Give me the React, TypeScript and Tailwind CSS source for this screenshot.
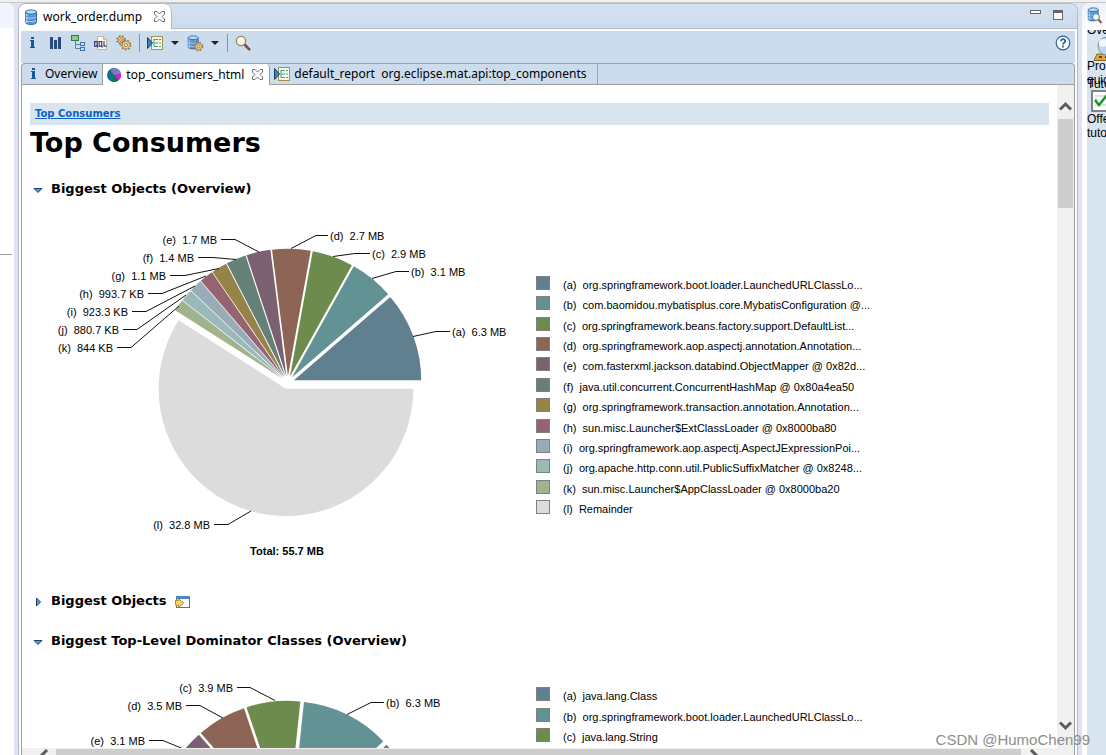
import type { ReactNode } from "react";

type Slice = { value: number; color: string };

type Callout = {
  text: string;
  side: "left" | "right";
  // line start next to the text, elbow x, and the point on the pie
  x: number;
  y: number;
  elbow: number;
  tip: [number, number];
};

type LegendEntry = { color: string; text: string };

const COLORS = [
  "#61808f",
  "#629294",
  "#6e8b4e",
  "#8d6556",
  "#7b6072",
  "#658177",
  "#968348",
  "#95646e",
  "#9aabb8",
  "#9abab9",
  "#a1b38c",
  "#dcdcdc",
];

const objectSlices: Slice[] = [
  6.3, 3.1, 2.9, 2.7, 1.7, 1.4, 1.1, 0.97, 0.9, 0.86, 0.83, 32.8,
].map((value, i) => ({ value, color: COLORS[i] }));

const objectCallouts: Callout[] = [
  { text: "(a)  6.3 MB", side: "right", x: 420, y: 132.5, elbow: 406, tip: [383, 137.5] },
  { text: "(b)  3.1 MB", side: "right", x: 379, y: 72.5, elbow: 366, tip: [342, 79.5] },
  { text: "(c)  2.9 MB", side: "right", x: 340, y: 54.5, elbow: 325, tip: [303, 57.5] },
  { text: "(d)  2.7 MB", side: "right", x: 298, y: 36.5, elbow: 286, tip: [261, 49.5] },
  { text: "(e)  1.7 MB", side: "left", x: 191, y: 40.5, elbow: 205, tip: [229, 53] },
  { text: "(f)  1.4 MB", side: "left", x: 168, y: 58.5, elbow: 183, tip: [206, 60.5] },
  { text: "(g)  1.1 MB", side: "left", x: 140, y: 76.5, elbow: 155, tip: [189, 69.5] },
  { text: "(h)  993.7 KB", side: "left", x: 118, y: 94.5, elbow: 132, tip: [176, 77] },
  { text: "(i)  923.3 KB", side: "left", x: 102, y: 112.5, elbow: 116, tip: [165, 87] },
  { text: "(j)  880.7 KB", side: "left", x: 93, y: 130.5, elbow: 107, tip: [156, 96] },
  { text: "(k)  844 KB", side: "left", x: 87, y: 148.5, elbow: 101, tip: [149, 107] },
  { text: "(l)  32.8 MB", side: "left", x: 184, y: 325.5, elbow: 198, tip: [221, 312] },
];

const objectLegend: LegendEntry[] = [
  "(a)  org.springframework.boot.loader.LaunchedURLClassLo...",
  "(b)  com.baomidou.mybatisplus.core.MybatisConfiguration @...",
  "(c)  org.springframework.beans.factory.support.DefaultList...",
  "(d)  org.springframework.aop.aspectj.annotation.Annotation...",
  "(e)  com.fasterxml.jackson.databind.ObjectMapper @ 0x82d...",
  "(f)  java.util.concurrent.ConcurrentHashMap @ 0x80a4ea50",
  "(g)  org.springframework.transaction.annotation.Annotation...",
  "(h)  sun.misc.Launcher$ExtClassLoader @ 0x8000ba80",
  "(i)  org.springframework.aop.aspectj.AspectJExpressionPoi...",
  "(j)  org.apache.http.conn.util.PublicSuffixMatcher @ 0x8248...",
  "(k)  sun.misc.Launcher$AppClassLoader @ 0x8000ba20",
  "(l)  Remainder",
].map((text, i) => ({ text, color: COLORS[i] }));

const classSlices: Slice[] = [
  { value: 6.7, color: COLORS[0] },
  { value: 6.3, color: COLORS[1] },
  { value: 3.8, color: COLORS[2] },
  { value: 3.5, color: COLORS[3] },
  { value: 3.1, color: COLORS[4] },
  { value: 32.3, color: COLORS[11] },
];

const classCallouts: Callout[] = [
  { text: "(b)  6.3 MB", side: "right", x: 354, y: 51.5, elbow: 341, tip: [317, 63.5] },
  { text: "(c)  3.9 MB", side: "left", x: 207, y: 36.5, elbow: 220, tip: [245, 49.5] },
  { text: "(d)  3.5 MB", side: "left", x: 156, y: 54.5, elbow: 170, tip: [193, 67] },
  { text: "(e)  3.1 MB", side: "left", x: 119, y: 89.5, elbow: 133, tip: [156, 99] },
];

const classLegend: LegendEntry[] = [
  { color: COLORS[0], text: "(a)  java.lang.Class" },
  { color: COLORS[1], text: "(b)  org.springframework.boot.loader.LaunchedURLClassLo..." },
  { color: COLORS[2], text: "(c)  java.lang.String" },
];

/* ---------- icons ---------- */

function InfoIcon() {
  return (
    <svg width="16" height="16" viewBox="0 0 16 16" fill="#14599c">
      <rect x="7" y="2" width="3" height="2" />
      <path d="M6 5h4v7h1v1H6v-1h1V6H6z" />
    </svg>
  );
}

function HistogramIcon() {
  return (
    <svg width="16" height="16" viewBox="0 0 16 16" fill="#2a4a7c">
      <rect x="3" y="2" width="3" height="12" />
      <rect x="7" y="5" width="3" height="9" />
      <rect x="11" y="2" width="3" height="12" />
    </svg>
  );
}

function TreeIcon() {
  return (
    <svg width="16" height="16" viewBox="0 0 16 16" fill="none">
      <path d="M5.500 6v7.500h5M5.500 9.500h5" stroke="#68809c" />
      <rect x="1.500" y="0.500" width="7" height="5" fill="#8cc98c" stroke="#2f7d46" />
      <rect x="10.500" y="7.500" width="4" height="3" fill="#cfe2f6" stroke="#3d73b0" />
      <rect x="10.500" y="12.500" width="4" height="3" fill="#cfe2f6" stroke="#3d73b0" />
    </svg>
  );
}

function OqlIcon() {
  return (
    <svg width="16" height="16" viewBox="0 0 16 16" fill="none">
      <path d="M4.500 1.500h6l3 3v10h-9z" fill="#fdfbf0" stroke="#c4b48c" />
      <path d="M10.500 1.500v3h3" stroke="#c4b48c" />
      <g stroke="#3c3c7c" strokeWidth="1.200">
        <rect x="1.600" y="6.600" width="2.600" height="4.600" />
        <rect x="6.100" y="6.600" width="2.600" height="4.600" />
        <path d="M3.500 10l1.500 2.500M8 10l1.500 2.500M11 6v5.200h2.600" />
      </g>
    </svg>
  );
}

function Gear({ cx, cy, r }: { cx: number; cy: number; r: number }) {
  return (
    <g>
      <circle cx={cx} cy={cy} r={r} stroke="#a07836" strokeWidth="1.600" strokeDasharray="1.8 1.4" />
      <circle cx={cx} cy={cy} r={r - 1} fill="#f3dca8" stroke="#b08a48" strokeWidth="0.900" />
      <circle cx={cx} cy={cy} r={r / 3} fill="#fff" stroke="#8a6420" strokeWidth="0.800" />
    </g>
  );
}

function GearsIcon() {
  return (
    <svg width="16" height="16" viewBox="0 0 16 16" fill="none">
      <Gear cx={5} cy={5} r={4} />
      <Gear cx={10} cy={10} r={4.6} />
    </svg>
  );
}

function ReportIcon() {
  return (
    <svg width="16" height="16" viewBox="0 0 16 16" fill="none">
      <rect x="4.500" y="1.500" width="11" height="13" fill="#f3f8f1" stroke="#a8924e" />
      <path d="M7 4v8M7 4.500h4M7 8h4M7 11.500h4M12 4.500h2M12 8h2M12 11.500h2" stroke="#47a170" />
      <path d="M0.500 2.500l5 5.500-5 5.500z" fill="#3f83b5" stroke="#173f78" />
    </svg>
  );
}

function DatabaseShape() {
  return (
    <g stroke="#2563a8" strokeWidth="0.900">
      <path d="M2.500 3v10.500c0 2.600 11 2.600 11 0V3z" fill="#5b9ad8" />
      <path d="M3.500 5v9" stroke="#b7dbfa" strokeWidth="1.500" />
      <ellipse cx="8" cy="3" rx="5.500" ry="2.100" fill="#b9dbf8" />
      <path d="M2.500 6.500c0 2.600 11 2.600 11 0M2.500 10c0 2.600 11 2.600 11 0" fill="none" />
      <path d="M3 7.800c1.500 1.600 8.500 1.600 10 0M3 11.300c1.500 1.600 8.500 1.600 10 0" stroke="#c5e2fb" fill="none" />
    </g>
  );
}

function DatabaseIcon() {
  return (
    <svg width="16" height="16" viewBox="0 0 16 16">
      <DatabaseShape />
    </svg>
  );
}

function DatabaseGearIcon() {
  return (
    <svg width="18" height="17" viewBox="0 0 18 17" fill="none" className="shrink-0">
      <g transform="scale(.9)">
        <DatabaseShape />
      </g>
      <Gear cx={12.5} cy={11.5} r={4} />
    </svg>
  );
}

function DatabaseSearchIcon() {
  return (
    <svg width="17" height="17" viewBox="0 0 17 17" fill="none">
      <g transform="scale(.9)">
        <DatabaseShape />
      </g>
      <path d="M12.500 12.500l3 3.500" stroke="#8b5a3c" strokeWidth="2" />
      <circle cx="10" cy="10" r="3.400" fill="#eef6fd" stroke="#5f7f9f" />
    </svg>
  );
}

function MagnifierIcon() {
  return (
    <svg width="16" height="16" viewBox="0 0 16 16" fill="none">
      <path d="M10 10l4.300 4.300" stroke="#7b4a35" strokeWidth="2.600" strokeLinecap="round" />
      <circle cx="6" cy="6" r="4.600" fill="#fdf8e6" stroke="#8f8768" strokeWidth="1.300" />
    </svg>
  );
}

function PieIcon() {
  return (
    <svg width="16" height="16" viewBox="0 0 16 16">
      <circle cx="8" cy="8" r="7" fill="#12708f" />
      <path d="M8 8L4 2.300A7 7 0 0 1 15 7z" fill="#8078c0" />
      <path d="M8 8l7-1a7 7 0 0 1-2.500 6.300z" fill="#f00fe8" />
      <path d="M8 8l4.500 5.300A7 7 0 0 1 6 14.700z" fill="#087c46" />
    </svg>
  );
}

function CloseIcon() {
  return (
    <svg width="11" height="11" viewBox="0 0 11 11" fill="#fff" stroke="#6e6e6e">
      <path d="M.5.5h2.500l2.500 2.500L8 .5h2.500V3L8 5.500 10.500 8v2.500H8L5.500 8 3 10.500H.5V8L3 5.500.5 3z" />
    </svg>
  );
}

function HelpIcon() {
  return (
    <svg width="16" height="16" viewBox="0 0 16 16" fill="none" stroke="#2d6498">
      <circle cx="8" cy="8" r="6.800" fill="#fff" strokeWidth="1.200" />
      <path d="M5.900 6.200c0-2.700 4.300-2.600 4.300 0 0 1.500-2.200 1.500-2.200 3.200" strokeWidth="1.800" />
      <path d="M8 10.600v1.800" strokeWidth="1.800" />
    </svg>
  );
}

function CaretDown() {
  return (
    <svg width="8" height="4" viewBox="0 0 8 4">
      <path d="M0 0h8L4 4z" fill="#222" />
    </svg>
  );
}

function QueryIcon() {
  return (
    <svg width="16" height="14" viewBox="0 0 16 14" fill="none">
      <rect x="1.500" y="1.500" width="13" height="11" fill="#f8fafc" stroke="#75715c" />
      <rect x="1" y="1" width="14" height="3" fill="#4b87c5" />
      <path d="M.5 5.500h3V3.800L8.500 8l-5 4.200v-2h-3z" fill="#f9d673" stroke="#bd8521" />
    </svg>
  );
}

function Twistie({ open }: { open: boolean }) {
  return (
    <svg width="10" height="10" viewBox="0 0 10 10" fill="#5a9bd0" stroke="#1c3f6e">
      {open ? <path d="M1 3.500h8L5 7.500z" /> : <path d="M3.500 1v8l4-4z" />}
    </svg>
  );
}

function CrystalBallIcon() {
  return (
    <svg width="30" height="24" viewBox="0 0 30 24">
      <path d="M4 17h20l3 6.500H1z" fill="#d9a840" stroke="#8a6420" />
      <path d="M6 20h16" stroke="#5e4313" strokeWidth="2" strokeDasharray="3 3" />
      <circle cx="14" cy="9" r="9" fill="#bcd9ee" stroke="#7b94ac" />
      <circle cx="10" cy="6" r="4" fill="#f2f9fe" />
    </svg>
  );
}

function ChecklistIcon() {
  return (
    <svg width="22" height="22" viewBox="0 0 22 22" fill="none">
      <rect x="1" y="1" width="20" height="20" fill="#fafcfd" stroke="#7d8488" strokeWidth="2" />
      <path d="M4 6h12M4 9h3M4 15h12" stroke="#b9c9d6" />
      <path d="M4 10l4 5 8-10" stroke="#21922a" strokeWidth="2.500" />
    </svg>
  );
}

/* ---------- chart ---------- */

const CX = 257.8;
const CY = 183.5;
const R = 127.3;
const EXPLODE = 6.5;

function slicePath(from: number, to: number) {
  const mid = (from + to) / 2;
  const x = CX + EXPLODE * Math.cos(mid);
  const y = CY - EXPLODE * Math.sin(mid);
  const x1 = x + R * Math.cos(from);
  const y1 = y - R * Math.sin(from);
  const x2 = x + R * Math.cos(to);
  const y2 = y - R * Math.sin(to);
  const large = to - from > Math.PI ? 1 : 0;
  return `M${x} ${y}L${x1} ${y1}A${R} ${R} 0 ${large} 0 ${x2} ${y2}Z`;
}

function PieChart({
  slices,
  callouts,
  total,
  label,
}: {
  slices: Slice[];
  callouts: Callout[];
  total?: string;
  label: string;
}) {
  const sum = slices.reduce((acc, s) => acc + s.value, 0);
  let angle = 0;

  return (
    <svg
      width="506"
      height="372"
      role="img"
      aria-label={label}
      className="shrink-0 font-['Liberation_Sans',sans-serif] text-[11px]"
    >
      {slices.map((slice, i) => {
        const from = angle;
        angle += (slice.value / sum) * Math.PI * 2;
        return <path key={i} d={slicePath(from, angle)} fill={slice.color} />;
      })}
      {callouts.map((c) => (
        <g key={c.text}>
          <polyline
            points={`${c.x},${c.y} ${c.elbow},${c.y} ${c.tip[0]},${c.tip[1]}`}
            fill="none"
            stroke="#111"
          />
          <text
            x={c.side === "left" ? c.x - 4 : c.x + 2}
            y={c.y + 4.5}
            textAnchor={c.side === "left" ? "end" : "start"}
            className="whitespace-pre"
          >
            {c.text}
          </text>
        </g>
      ))}
      {total && (
        <text x="257" y="356" textAnchor="middle" className="font-bold">
          {total}
        </text>
      )}
    </svg>
  );
}

function Legend({ entries, className }: { entries: LegendEntry[]; className: string }) {
  return (
    <ul
      className={`flex flex-col justify-between font-['Liberation_Sans',sans-serif] text-[11px] leading-[14px] ${className}`}
    >
      {entries.map((entry) => (
        <li key={entry.text} className="flex h-3.5 gap-[13px]">
          <span
            className="size-3.5 shrink-0 border border-[#808080]"
            style={{ backgroundColor: entry.color }}
          />
          <span className="whitespace-pre pt-0.5">{entry.text}</span>
        </li>
      ))}
    </ul>
  );
}

/* ---------- panels ---------- */

function ToolButton({ label, children }: { label: string; children: ReactNode }) {
  return (
    <button type="button" aria-label={label} className="flex size-4 items-center justify-center">
      {children}
    </button>
  );
}

function MenuButton({ label }: { label: string }) {
  return (
    <button type="button" aria-label={label} className="flex h-4 w-2.5 items-center justify-center">
      <CaretDown />
    </button>
  );
}

function Separator() {
  return <span className="h-[18px] w-px bg-[#8b8f98]" />;
}

function Toolbar() {
  return (
    <div className="flex h-8 shrink-0 items-center gap-[7px] bg-[#cddcec] pr-1 pb-2 pl-[3px]">
      <ToolButton label="Overview"><InfoIcon /></ToolButton>
      <ToolButton label="Histogram"><HistogramIcon /></ToolButton>
      <ToolButton label="Dominator tree"><TreeIcon /></ToolButton>
      <ToolButton label="Object query"><OqlIcon /></ToolButton>
      <ToolButton label="Threads"><GearsIcon /></ToolButton>
      <Separator />
      <ToolButton label="Run report"><ReportIcon /></ToolButton>
      <MenuButton label="Report menu" />
      <ToolButton label="Query browser"><DatabaseGearIcon /></ToolButton>
      <MenuButton label="Query menu" />
      <Separator />
      <ToolButton label="Find"><MagnifierIcon /></ToolButton>
      <div className="ml-auto">
        <ToolButton label="Help"><HelpIcon /></ToolButton>
      </div>
    </div>
  );
}

function EditorTabs() {
  const tab = "flex h-full items-center border-r border-[#a0a0a0]";
  return (
    <div
      role="tablist"
      className="flex h-[22px] shrink-0 rounded-t-sm border border-b-0 border-[#a0a0a0] bg-[#cddcec]"
    >
      <button type="button" role="tab" aria-selected={false} className={`${tab} gap-1 border-b pr-[5px] pl-[3px]`}>
        <InfoIcon />
        Overview
      </button>
      <div role="tab" aria-selected className={`${tab} gap-1 rounded-tr-sm bg-white pr-1.5 pl-[3px]`}>
        <PieIcon />
        top_consumers_html
        <button type="button" aria-label="Close tab" className="ml-1"><CloseIcon /></button>
      </div>
      <button
        type="button"
        role="tab"
        aria-selected={false}
        className={`${tab} gap-1 border-b pr-2.5 pl-1 whitespace-pre`}
      >
        <ReportIcon />
        {"default_report  org.eclipse.mat.api:top_components"}
      </button>
      <div className="grow border-b border-[#a0a0a0]" />
    </div>
  );
}

function SectionTitle({ open, children }: { open: boolean; children: ReactNode }) {
  return (
    <h2 className="flex h-5 items-center gap-2 pl-[3px] text-[13px] leading-5 font-bold">
      <button type="button" aria-label="Toggle section" className="pt-0.5"><Twistie open={open} /></button>
      {children}
    </h2>
  );
}

function Report() {
  return (
    <main className="min-w-0 grow overflow-hidden bg-white px-2 pt-[18px] font-['DejaVu_Sans',Verdana,sans-serif] text-black">
      <nav className="flex h-[22px] items-center bg-[#d8e5ef] px-[5px] text-[10px] font-bold">
        <a href="#top" className="text-[#0a62c9] underline">Top Consumers</a>
      </nav>
      <h1 className="text-[27px] leading-9 font-bold">Top Consumers</h1>

      <section className="mt-[18px]">
        <SectionTitle open>Biggest Objects (Overview)</SectionTitle>
        <div className="flex">
          <PieChart
            slices={objectSlices}
            callouts={objectCallouts}
            total="Total: 55.7 MB"
            label="Biggest objects"
          />
          <Legend entries={objectLegend} className="mt-[77px] h-[238px]" />
        </div>
      </section>

      <section className="mt-5">
        <SectionTitle open={false}>
          <span>Biggest Objects</span>
          <a href="#query" aria-label="Open in query" className="pt-0.5"><QueryIcon /></a>
        </SectionTitle>
      </section>

      <section className="mt-5">
        <SectionTitle open>Biggest Top-Level Dominator Classes (Overview)</SectionTitle>
        <div className="flex">
          <PieChart slices={classSlices} callouts={classCallouts} label="Biggest top-level dominator classes" />
          <Legend entries={classLegend} className="mt-9 h-[55px]" />
        </div>
      </section>
    </main>
  );
}

function Chevron({ d }: { d: string }) {
  return (
    <svg width="17" height="17" viewBox="0 0 17 17" className="shrink-0" fill="none" stroke="#5c5c5c" strokeWidth="3">
      <path d={d} />
    </svg>
  );
}

function VerticalScrollbar() {
  return (
    <div className="flex w-[17px] shrink-0 flex-col items-center bg-[#f0f0f0] pt-3.5">
      <Chevron d="M3 10.500l5.500-5.500 5.500 5.500" />
      <div className="mt-[3px] h-[89px] w-[15px] bg-[#cdcdcd]" />
      <div className="mt-auto pb-3.5">
        <Chevron d="M3 5.500l5.500 5.500 5.500-5.500" />
      </div>
    </div>
  );
}

function HorizontalScrollbar() {
  return (
    <div className="flex h-[7px] shrink-0 items-start overflow-hidden bg-[#f0f0f0] pt-px pr-8 pl-[13px]">
      <Chevron d="M12 1L6.500 6.500 12 12" />
      <div className="ml-1 h-4 grow bg-[#cdcdcd]" />
      <div className="ml-1">
        <Chevron d="M6 1l5.500 5.500L6 12" />
      </div>
    </div>
  );
}

function Editor() {
  return (
    <div className="flex min-w-0 grow flex-col overflow-hidden rounded-t-lg border border-b-0 border-[#b4b9c6] bg-white font-['Noto_Sans','Open_Sans',sans-serif] text-xs text-black">
      <div className="flex h-[25px] shrink-0 items-stretch border-b border-[#b0b8d0] bg-linear-to-b from-[#d3e1f0] to-[#cddcec]">
        <div className="-mb-px flex items-center gap-1 rounded-tr-lg border-r border-[#b0b8d0] bg-white pr-1.5 pl-1">
          <DatabaseIcon />
          <span>work_order.dump</span>
          <button type="button" aria-label="Close editor" className="ml-2"><CloseIcon /></button>
        </div>
        <div className="ml-auto flex gap-3 pt-1.5 pr-3.5">
          <button type="button" aria-label="Minimize" className="flex h-[11px] w-[11px] items-start">
            <span className="h-1 w-full border border-[#666] bg-white" />
          </button>
          <button type="button" aria-label="Maximize" className="h-2.5 w-2.5 border border-t-[3px] border-[#666] bg-white" />
        </div>
      </div>
      <div className="flex min-h-0 grow flex-col px-0.5 pt-0.5">
        <Toolbar />
        <EditorTabs />
        <div className="flex min-h-0 grow flex-col border-x border-[#a0a0a0]">
          <div className="flex min-h-0 grow">
            <Report />
            <VerticalScrollbar />
          </div>
          <HorizontalScrollbar />
        </div>
      </div>
    </div>
  );
}

function LeftPane() {
  return (
    <aside className="w-3.5 shrink-0 overflow-hidden rounded-tr-lg bg-white">
      <div className="h-[25px] bg-[#f4f5fc]" />
      <div className="mr-0.5 h-[227px] border-b border-[#a0a0a0]" />
    </aside>
  );
}

function HelpPane() {
  return (
    <aside className="flex w-6 shrink-0 flex-col overflow-hidden rounded-tl-lg bg-white font-['Liberation_Sans',sans-serif] text-xs leading-[14px] text-black">
      <div className="h-[27px] bg-linear-to-b from-[#eef1fa] to-white pt-1 pl-1">
        <DatabaseSearchIcon />
      </div>
      <div className="ml-[5px] grow overflow-hidden bg-[#d8e5ef]">
        <div className="flex h-[7px] items-end overflow-hidden"><p>Ove</p></div>
        <div className="h-6 pl-1.5"><CrystalBallIcon /></div>
        <p className="-mt-0.5">Pro</p>
        <p>quic</p>
        <p className="-mt-2.5">Tuto</p>
        <div className="-mt-px pl-1"><ChecklistIcon /></div>
        <p>Offe</p>
        <p>tuto</p>
      </div>
    </aside>
  );
}

export default function App() {
  return (
    <div className="relative flex h-screen flex-col overflow-hidden bg-[#dfe3f4]">
      <div className="h-0.5 shrink-0 bg-[#f0f0f0]" />
      <div className="flex min-h-0 grow border-t border-[#c8c8c8]">
        <LeftPane />
        <div className="flex min-w-0 grow px-1">
          <Editor />
        </div>
        <HelpPane />
      </div>
      <p className="absolute right-4 bottom-[5px] font-['Liberation_Sans',sans-serif] text-[15px] leading-5 text-[#8d8d8d]">
        CSDN @HumoChen99
      </p>
    </div>
  );
}
